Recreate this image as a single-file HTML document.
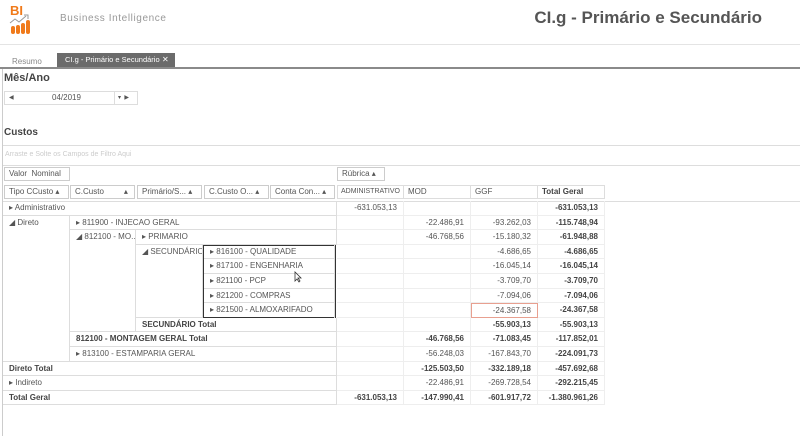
<!DOCTYPE html>
<html><head><meta charset="utf-8"><style>
*{margin:0;padding:0;box-sizing:border-box}
body{width:800px;height:436px;background:#fff;position:relative;overflow:hidden;font-family:"Liberation Sans",sans-serif;font-size:8px;color:#555}
.a{position:absolute;white-space:nowrap}
.c{position:absolute;border-right:1px solid #ddd;border-bottom:1px solid #ddd;padding-left:6px;line-height:14px;white-space:nowrap;overflow:hidden}
.h{position:absolute;border:1px solid #ccc;height:14px;line-height:12px;padding-left:4px;white-space:nowrap;overflow:hidden}
.v{position:absolute;text-align:right;padding-right:6px;line-height:14px;width:67px;border-right:1px solid #eee;border-bottom:1px solid #eee;height:14.6px}
.b{font-weight:bold;color:#444}
.hl{position:absolute;height:1px;background:#ddd}
</style></head><body>
<div class="a" style="left:10px;top:3px;font-size:13px;font-weight:bold;color:#f07a1a">BI</div>
<svg class="a" style="left:9px;top:14px" width="22" height="20" viewBox="0 0 22 20"><polyline points="1,9 6,5 10,8 17,2" fill="none" stroke="#999" stroke-width="1"/><path d="M15,1 L19,1 L19,5" fill="none" stroke="#999"/><rect x="2" y="12" width="4" height="8" rx="2" fill="#f07a1a"/><rect x="7" y="11" width="4" height="9" rx="2" fill="#f07a1a"/><rect x="12" y="9" width="4" height="11" rx="2" fill="#f07a1a"/><rect x="17" y="6" width="4" height="14" rx="2" fill="#f07a1a"/></svg>
<div class="a" style="left:60px;top:13px;font-size:10px;color:#999;letter-spacing:0.6px">Business Intelligence</div>
<div class="a" style="right:38px;top:8px;font-size:17px;font-weight:bold;color:#555">CI.g - Primário e Secundário</div>
<div class="hl" style="left:0;top:44px;width:800px;background:#e4e4e4"></div>
<div class="a" style="left:12px;top:57px;color:#888">Resumo</div>
<div class="a" style="left:57px;top:53px;width:118px;height:14px;background:#6b6b6b;color:#fff;padding-left:8px;line-height:14px;font-size:7.5px">CI.g - Primário e Secundário</div>
<div class="a" style="left:162px;top:53px;line-height:14px;color:#fff;font-size:8px">✕</div>
<div class="hl" style="left:0;top:67px;width:800px;height:2px;background:#8a8a8a"></div>
<div class="a" style="left:2px;top:69px;width:1px;height:367px;background:#ccc"></div>
<div class="a" style="left:4px;top:72px;font-size:11px;font-weight:bold;color:#444">Mês/Ano</div>
<div class="a" style="left:4px;top:91px;width:134px;height:14px;border:1px solid #ddd"></div>
<div class="a" style="left:9px;top:94px;font-size:6px">◀</div>
<div class="a" style="left:52px;top:93px;color:#555">04/2019</div>
<div class="a" style="left:114px;top:91px;width:1px;height:14px;background:#ddd"></div>
<div class="a" style="left:118px;top:94px;font-size:6px">▾ &nbsp;▶</div>
<div class="a" style="left:4px;top:127px;font-size:10px;font-weight:bold;color:#444">Custos</div>
<div class="hl" style="left:3px;top:145px;width:797px"></div>
<div class="a" style="left:5px;top:151px;color:#ccc;font-size:7px">Arraste e Solte os Campos de Filtro Aqui</div>
<div class="hl" style="left:3px;top:165px;width:797px"></div>
<div class="h" style="left:4px;top:167px;width:66px">Valor&nbsp; Nominal</div>
<div class="h" style="left:337px;top:167px;width:48px">Rúbrica ▴</div>
<div class="h" style="left:4px;top:185px;width:65px">Tipo CCusto ▴</div>
<div class="h" style="left:70px;top:185px;width:65px">C.Custo &nbsp; &nbsp; &nbsp; &nbsp; ▴</div>
<div class="h" style="left:137px;top:185px;width:65px">Primário/S... ▴</div>
<div class="h" style="left:204px;top:185px;width:65px">C.Custo O... ▴</div>
<div class="h" style="left:270px;top:185px;width:65px">Conta Con... ▴</div>
<div class="h" style="left:337px;top:185px;width:67px;border-color:#ddd;font-size:7px;padding-left:3px">ADMINISTRATIVO</div>
<div class="h" style="left:403px;top:185px;width:68px;border-color:#ddd">MOD</div>
<div class="h" style="left:470px;top:185px;width:68px;border-color:#ddd">GGF</div>
<div class="h b" style="left:537px;top:185px;width:68px;border-color:#ddd">Total Geral</div>
<div class="hl" style="left:3px;top:201px;width:797px"></div>
<div class="c" style="left:3px;top:201px;width:334px;height:14.6px">▸ Administrativo</div>
<div class="c" style="left:3px;top:215.6px;width:67px;height:146px">◢ Direto</div>
<div class="c" style="left:70px;top:215.6px;width:267px;height:14.6px">▸ 811900 - INJECAO GERAL</div>
<div class="c" style="left:70px;top:230.2px;width:66px;height:102.2px">◢ 812100 - MO...</div>
<div class="c" style="left:136px;top:230.2px;width:201px;height:14.6px">▸ PRIMARIO</div>
<div class="c" style="left:136px;top:244.8px;width:67px;height:73px">◢ SECUNDÁRIO</div>
<div class="a" style="left:203px;top:244.8px;width:133px;height:73.4px;border:1px solid #333"></div>
<div class="c" style="left:204px;top:244.8px;width:131px;height:14.6px">▸ 816100 - QUALIDADE</div>
<div class="c" style="left:204px;top:259.4px;width:131px;height:14.6px">▸ 817100 - ENGENHARIA</div>
<div class="c" style="left:204px;top:274px;width:131px;height:14.6px">▸ 821100 - PCP</div>
<div class="c" style="left:204px;top:288.6px;width:131px;height:14.6px">▸ 821200 - COMPRAS</div>
<div class="c" style="left:204px;top:303.2px;width:131px;height:14.6px;border-bottom:none">▸ 821500 - ALMOXARIFADO</div>
<div class="c b" style="left:136px;top:317.8px;width:201px;height:14.6px">SECUNDÁRIO Total</div>
<div class="c b" style="left:70px;top:332.4px;width:267px;height:14.6px">812100 - MONTAGEM GERAL Total</div>
<div class="c" style="left:70px;top:347px;width:267px;height:14.6px">▸ 813100 - ESTAMPARIA GERAL</div>
<div class="c b" style="left:3px;top:361.6px;width:334px;height:14.6px">Direto Total</div>
<div class="c" style="left:3px;top:376.2px;width:334px;height:14.6px">▸ Indireto</div>
<div class="c b" style="left:3px;top:390.8px;width:334px;height:14.6px">Total Geral</div>
<svg class="a" style="left:294px;top:271px" width="8" height="12" viewBox="0 0 8 12"><path d="M1,1 L1,10 L3,8 L5,11 L6,10 L4,7 L7,7 Z" fill="#fff" stroke="#333" stroke-width="0.8"/></svg>
<div style="position:absolute;left:337px;top:201px">
<div style="position:relative">
<div class="v" style="left:0;top:0">-631.053,13</div><div class="v" style="left:67px;top:0"></div><div class="v" style="left:134px;top:0"></div><div class="v b" style="left:201px;top:0">-631.053,13</div>
<div class="v" style="left:0;top:14.6px"></div><div class="v" style="left:67px;top:14.6px">-22.486,91</div><div class="v" style="left:134px;top:14.6px">-93.262,03</div><div class="v b" style="left:201px;top:14.6px">-115.748,94</div>
<div class="v" style="left:0;top:29.2px"></div><div class="v" style="left:67px;top:29.2px">-46.768,56</div><div class="v" style="left:134px;top:29.2px">-15.180,32</div><div class="v b" style="left:201px;top:29.2px">-61.948,88</div>
<div class="v" style="left:0;top:43.8px"></div><div class="v" style="left:67px;top:43.8px"></div><div class="v" style="left:134px;top:43.8px">-4.686,65</div><div class="v b" style="left:201px;top:43.8px">-4.686,65</div>
<div class="v" style="left:0;top:58.4px"></div><div class="v" style="left:67px;top:58.4px"></div><div class="v" style="left:134px;top:58.4px">-16.045,14</div><div class="v b" style="left:201px;top:58.4px">-16.045,14</div>
<div class="v" style="left:0;top:73px"></div><div class="v" style="left:67px;top:73px"></div><div class="v" style="left:134px;top:73px">-3.709,70</div><div class="v b" style="left:201px;top:73px">-3.709,70</div>
<div class="v" style="left:0;top:87.6px"></div><div class="v" style="left:67px;top:87.6px"></div><div class="v" style="left:134px;top:87.6px">-7.094,06</div><div class="v b" style="left:201px;top:87.6px">-7.094,06</div>
<div class="v" style="left:0;top:102.2px"></div><div class="v" style="left:67px;top:102.2px"></div><div class="v" style="left:134px;top:102.2px;border:1px solid #e8a090">-24.367,58</div><div class="v b" style="left:201px;top:102.2px">-24.367,58</div>
<div class="v" style="left:0;top:116.8px"></div><div class="v" style="left:67px;top:116.8px"></div><div class="v b" style="left:134px;top:116.8px">-55.903,13</div><div class="v b" style="left:201px;top:116.8px">-55.903,13</div>
<div class="v" style="left:0;top:131.4px"></div><div class="v b" style="left:67px;top:131.4px">-46.768,56</div><div class="v b" style="left:134px;top:131.4px">-71.083,45</div><div class="v b" style="left:201px;top:131.4px">-117.852,01</div>
<div class="v" style="left:0;top:146px"></div><div class="v" style="left:67px;top:146px">-56.248,03</div><div class="v" style="left:134px;top:146px">-167.843,70</div><div class="v b" style="left:201px;top:146px">-224.091,73</div>
<div class="v" style="left:0;top:160.6px"></div><div class="v b" style="left:67px;top:160.6px">-125.503,50</div><div class="v b" style="left:134px;top:160.6px">-332.189,18</div><div class="v b" style="left:201px;top:160.6px">-457.692,68</div>
<div class="v" style="left:0;top:175.2px"></div><div class="v" style="left:67px;top:175.2px">-22.486,91</div><div class="v" style="left:134px;top:175.2px">-269.728,54</div><div class="v b" style="left:201px;top:175.2px">-292.215,45</div>
<div class="v b" style="left:0;top:189.8px">-631.053,13</div><div class="v b" style="left:67px;top:189.8px">-147.990,41</div><div class="v b" style="left:134px;top:189.8px">-601.917,72</div><div class="v b" style="left:201px;top:189.8px">-1.380.961,26</div>
</div></div>
</body></html>
